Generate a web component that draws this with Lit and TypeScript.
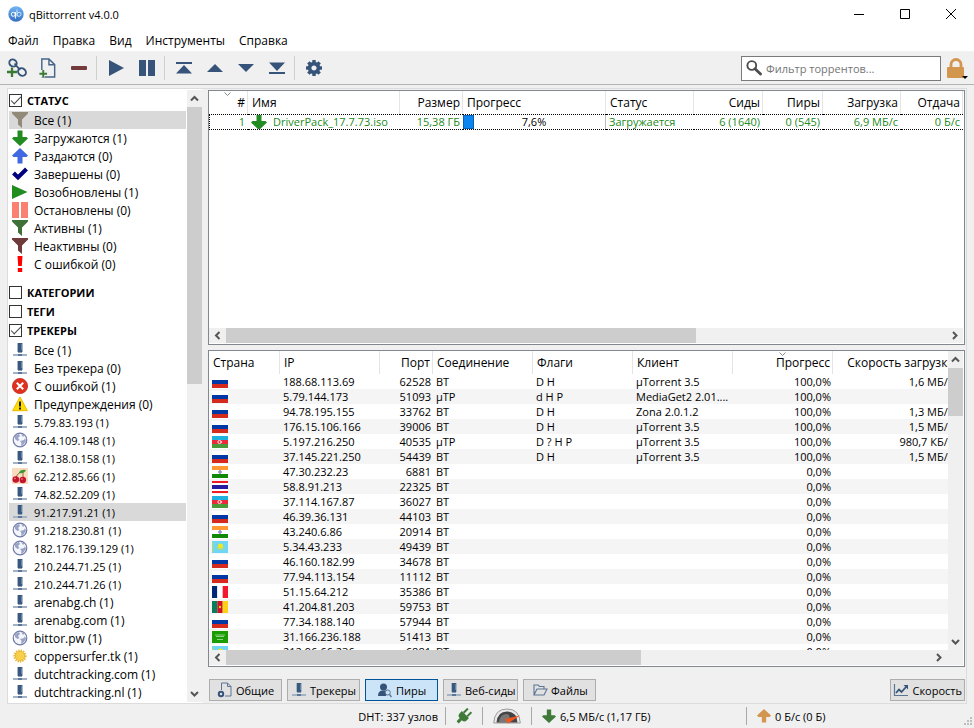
import { LitElement, html, css, svg, nothing, TemplateResult } from "lit";
import { customElement, property } from "lit/decorators.js";
import { classMap } from "lit/directives/class-map.js";

const NAVY = "#36537a";

type Icon = { box: string; body: TemplateResult };

const funnel = (color: string): Icon => ({
  box: "0 0 16 16",
  body: svg`<path fill=${color} d="M0 0H16V1.5L10 7.500V16L6 12.500V7.500L0 1.500Z"/>`,
});
const arrow = (color: string, up = false): Icon => ({
  box: "0 0 16 16",
  body: up
    ? svg`<path fill=${color} d="M8 0L16 7.500L14.500 9H10.500V15.500H5.500V9H1.500L0 7.500Z"/>`
    : svg`<path fill=${color} d="M8 16L16 8.500L14.500 7H10.500V.5H5.500V7H1.500L0 8.500Z"/>`,
});
const pageOutline = "M5.500 1H13L19 7V20H5.500Z M13 1V7H19";
const gearTeeth = [0, 45, 90, 135, 180, 225, 270, 315];

const icons: Record<string, Icon> = {
  logo: {
    box: "0 0 16 16",
    body: svg`<defs><linearGradient id="lg" x1="0" y1="0" x2="0" y2="1"><stop offset="0" stop-color="#72b4f5"/><stop offset="1" stop-color="#356ebf"/></linearGradient></defs>
      <circle cx="8" cy="8" r="7.700" fill="url(#lg)"/>
      <circle cx="5.300" cy="8.300" r="2" fill="none" stroke="#fff"/><path d="M7.400 6V12.500" stroke="#fff"/>
      <circle cx="11" cy="8.300" r="2" fill="none" stroke="#c8e8ff"/><path d="M9 3.500V10.500" stroke="#c8e8ff"/>`,
  },
  addLink: {
    box: "0 0 20 20",
    body: svg`<g fill="none" stroke=${NAVY} stroke-width="1.900"><ellipse cx="6" cy="5" rx="3.800" ry="3.400" transform="rotate(35 6 5)"/><ellipse cx="15" cy="14" rx="4.200" ry="3.500" transform="rotate(40 15 14)"/><path d="M7.500 5.500L13 12"/></g>
      <path d="M0 14H10M5 9.500V19" stroke="#efefef" stroke-width="4"/><path d="M0 14H10M5 9.500V19" stroke="#3a7a35" stroke-width="2.300"/>`,
  },
  addFile: {
    box: "0 0 20 21",
    body: svg`<path d=${pageOutline} transform="translate(-2 0)" fill="none" stroke="#47648a" stroke-width="1.500"/>
      <path d="M0 16.500H9M4.500 12.500V20.500" stroke="#efefef" stroke-width="4"/><path d="M1 16.500H9M5 12.500V20.500" stroke="#3a7a35" stroke-width="2"/>`,
  },
  remove: { box: "0 0 16 16", body: svg`<rect x="0" y="6" width="16" height="4" rx="1" fill="#733b3b"/>` },
  play: { box: "0 0 16 16", body: svg`<path fill=${NAVY} d="M1 0L16 8L1 16Z"/>` },
  pause: { box: "0 0 16 16", body: svg`<path fill=${NAVY} d="M0 0H7V16H0ZM9 0H16V16H9Z"/>` },
  top: { box: "0 0 16 12", body: svg`<path fill=${NAVY} d="M0 0H16V2H0ZM8 3L16 11.500H0Z"/>` },
  up: { box: "0 0 16 12", body: svg`<path fill=${NAVY} d="M8 2L16 10H0Z"/>` },
  down: { box: "0 0 16 12", body: svg`<path fill=${NAVY} d="M8 10L16 2H0Z"/>` },
  bottom: { box: "0 0 16 12", body: svg`<path fill=${NAVY} d="M0 10H16V12H0ZM8 9L16 .5H0Z"/>` },
  gear: {
    box: "-8 -8 16 16",
    body: svg`<circle r="4.400" fill="none" stroke=${NAVY} stroke-width="3.600"/>${gearTeeth.map(
      (a) => svg`<rect x="-1.700" y="-8" width="3.400" height="3" fill=${NAVY} transform="rotate(${a})"/>`,
    )}`,
  },
  search: {
    box: "0 0 16 16",
    body: svg`<circle cx="5.800" cy="5.500" r="4.400" fill="none" stroke="#4d4d4d" stroke-width="1.900"/><path d="M9 8.700L14.500 14" stroke="#4d4d4d" stroke-width="2.800" stroke-linecap="round"/>`,
  },
  lock: {
    box: "0 0 21 21",
    body: svg`<path d="M4 10V6.500A5 5 0 0 1 14 6.500V10" fill="none" stroke="#d3964f" stroke-width="2.800"/><rect x="0" y="9" width="17" height="11" rx="1" fill="#d3964f"/><path d="M15 18H21L18 21Z" fill="#000"/>`,
  },
  funnelAll: funnel("#918a78"),
  funnelOn: funnel("#3f7038"),
  funnelOff: funnel("#6e3a3a"),
  arrowDown: arrow("#228b22"),
  arrowUp: arrow("#4169e1", true),
  statusDown: arrow("#3f7a38"),
  statusUp: arrow("#d3964f", true),
  check: { box: "0 0 16 16", body: svg`<path d="M1.500 7L6 11.500L14.500 3" fill="none" stroke="#000080" stroke-width="4"/>` },
  resumed: { box: "0 0 16 16", body: svg`<path fill="#228b22" d="M0 1L15.500 8L0 15Z"/>` },
  paused: { box: "0 0 16 16", body: svg`<path fill="#fa8072" d="M0 0H7V16H0ZM9 0H16V16H9Z"/>` },
  error: { box: "0 0 16 16", body: svg`<path fill="#f00" d="M5.500 0H10.500L9.800 10H6.200ZM5.800 12H10.200V16H5.800Z"/>` },
  server: {
    box: "0 0 16 16",
    body: svg`<path d="M1 13H15" stroke="#a3b2c5" stroke-width="2"/><rect x="5" y="1" width="6" height="9" fill="#a9b6c6"/><rect x="6" y="1" width="4" height="9" fill="#395880"/><path d="M9.500 2V8" stroke="#6b83a3"/><path d="M6 10.500H10" stroke="#8a9db6"/><rect x="6" y="12" width="4" height="2" fill="#5c7799"/>`,
  },
  failed: { box: "0 0 16 16", body: svg`<circle cx="8" cy="8" r="7.600" fill="#e03020" stroke="#c22a1c" stroke-width=".8"/><path d="M4.800 4.800L11.200 11.200M11.200 4.800L4.800 11.200" stroke="#fff" stroke-width="2"/>` },
  warning: { box: "0 0 16 16", body: svg`<path d="M8 1L15.400 14.700H.6Z" fill="#fd0" stroke="#eeb800"/><path d="M8 5.500V10.500M8 11.500V13.500" stroke="#111" stroke-width="1.900"/>` },
  globe: {
    box: "0 0 16 16",
    body: svg`<circle cx="8" cy="8" r="6.800" fill="#f4f6fb" stroke="#7079a8" stroke-width="1.200"/><path d="M3 4L7 2L8 4L6 6L7.500 8L5.500 9L3 7ZM9 2L12.500 3.500L11 5ZM8 9L12 8L13 6L14 9L11 13L9 14L9.500 11Z" fill="#98a3c6"/>`,
  },
  cherry: {
    box: "0 0 16 16",
    body: svg`<rect width="16" height="16" fill="#fadcc0"/><path d="M4 10Q5 5 11 3Q11 7 11 10" fill="none" stroke="#8a6c3a"/><path d="M7 5Q8 1 14 2Q12 6 7 5Z" fill="#3f9a33"/><circle cx="3.800" cy="11.500" r="3.300" fill="#c4142c"/><circle cx="10.800" cy="12" r="3.300" fill="#c4142c"/><circle cx="3" cy="10.500" r=".8" fill="#f5a0a0"/><circle cx="10" cy="11" r=".8" fill="#f5a0a0"/>`,
  },
  sun: {
    box: "-8 -8 16 16",
    body: svg`<circle r="5.600" fill="none" stroke="#e8b830" stroke-width="2" stroke-dasharray="1.400 1"/><circle r="4.700" fill="#f7cf48" stroke="#e0a828" stroke-width=".7"/>`,
  },
  general: {
    box: "0 0 16 16",
    body: svg`<path d="M4.500 8V1H10.500L14 4.500V14H8M10.500 1V4.500H14" fill="none" stroke="#5c7594"/><circle cx="4" cy="12" r="2.200" fill="none" stroke=${NAVY} stroke-width="2"/>`,
  },
  peers: {
    box: "0 0 16 16",
    body: svg`<circle cx="6.500" cy="5" r="3.500" fill=${NAVY}/><path d="M1 14Q1 9 5 8.500H8Q10 8.700 10.500 9.500L9 14Z" fill=${NAVY}/><circle cx="10.800" cy="10.500" r="2.500" fill="#cce4f7" stroke="#5c7594"/><path d="M12.500 12.500L14.500 15" stroke="#5c7594" stroke-width="1.300"/>`,
  },
  folder: { box: "0 0 16 16", body: svg`<path d="M2 13V3H6L7.500 4.500H12V6.500M2 13L5 7H15L12 13Z" fill="none" stroke="#5c7594" stroke-width="1.100"/>` },
  speed: { box: "0 0 16 16", body: svg`<path d="M1.500 2V13.500H15" fill="none" stroke="#5c7594" stroke-width="1.200"/><path d="M3 11L6 7.500L8.500 10L13 5" fill="none" stroke=${NAVY} stroke-width="1.800"/><path d="M10.500 3H15V7.500Z" fill=${NAVY}/>` },
  plug: {
    box: "0 0 16 16",
    body: svg`<g transform="rotate(45 8 8)" fill="#3f7a38"><path d="M3 6H13V9Q13 12.500 9.500 12.500V17H6.500V12.500Q3 12.500 3 9Z"/><path d="M4.500 0H6.500V6H4.500ZM9.500 0H11.500V6H9.500Z"/></g>`,
  },
  gauge: {
    box: "0 0 28 16",
    body: svg`<path d="M.7 15Q1.500 1 14 1Q26.500 1 27.300 15Z" fill="#e9e9e9" stroke="#9a9a9a"/><path d="M3.500 14.500Q4.500 3.500 14 3.500Q23.500 3.500 24.500 14.500Z" fill="#444"/><path d="M6 14Q7 6 14 6Q17 6 17 14Z" fill="#777"/><path d="M12 11L27 7.500L15 15.500Z" fill="#f0551e"/>`,
  },
  grip: { box: "0 0 8 8", body: svg`<path d="M6 0H8V2H6ZM3 3H5V5H3ZM6 3H8V5H6ZM0 6H2V8H0ZM3 6H5V8H3ZM6 6H8V8H6Z" fill="#bfbfbf"/>` },
};

const iconTpl = (name: string, cls: string) => {
  const i = icons[name];
  return html`<svg class=${cls} viewBox=${i.box} aria-hidden="true">${i.body}</svg>`;
};

const hStripes = (colors: string[]) =>
  svg`${colors.map((c, i) => svg`<rect y=${(i * 12) / colors.length} width="16" height=${12 / colors.length} fill=${c}/>`)}`;
const vStripes = (colors: string[]) =>
  svg`${colors.map((c, i) => svg`<rect x=${(i * 16) / colors.length} width=${16 / colors.length} height="12" fill=${c}/>`)}`;

const flags: Record<string, TemplateResult> = {
  ru: hStripes(["#fff", "#0039a6", "#d52b1e"]),
  az: svg`${hStripes(["#1eb0de", "#ed2939", "#4a9a3a"])}<circle cx="7.500" cy="6" r="1.600" fill="none" stroke="#fff" stroke-width=".9"/><circle cx="9.500" cy="6" r=".7" fill="#fff"/>`,
  in: svg`${hStripes(["#f93", "#fff", "#128807"])}<path d="M6 6H10M8 4V8" stroke="#8f8fc8" stroke-width="1.600"/>`,
  th: hStripes(["#ed1c24", "#fff", "#241d9f", "#241d9f", "#fff", "#ed1c24"]),
  kz: svg`<rect width="16" height="12" fill="#6fd6f5"/><path d="M1 1V11" stroke="#b5dc6c"/><circle cx="8.500" cy="5" r="2.600" fill="#f2e61c"/><path d="M4 6Q8.500 11 13 6" fill="none" stroke="#c9de54"/>`,
  fr: vStripes(["#002678", "#fff", "#f31830"]),
  cm: svg`${vStripes(["#0a7c5a", "#ce1126", "#fcd116"])}<circle cx="8" cy="6" r="1.200" fill="#fcd116"/>`,
  sa: svg`<rect width="16" height="12" fill="#199d00"/><path d="M3 4H13M4 5.500H12" stroke="#8fd084" stroke-width="1.200"/><path d="M5 8.500H11" stroke="#b0dfa8" stroke-width=".8"/>`,
};

const statuses: [string, string][] = [
  ["funnelAll", "Все (1)"],
  ["arrowDown", "Загружаются (1)"],
  ["arrowUp", "Раздаются (0)"],
  ["check", "Завершены (0)"],
  ["resumed", "Возобновлены (1)"],
  ["paused", "Остановлены (0)"],
  ["funnelOn", "Активны (1)"],
  ["funnelOff", "Неактивны (0)"],
  ["error", "С ошибкой (0)"],
];

const trackers: [string, string][] = [
  ["server", "Все (1)"],
  ["server", "Без трекера (0)"],
  ["failed", "С ошибкой (1)"],
  ["warning", "Предупреждения (0)"],
  ["server", "5.79.83.193 (1)"],
  ["globe", "46.4.109.148 (1)"],
  ["server", "62.138.0.158 (1)"],
  ["cherry", "62.212.85.66 (1)"],
  ["server", "74.82.52.209 (1)"],
  ["server", "91.217.91.21 (1)"],
  ["globe", "91.218.230.81 (1)"],
  ["globe", "182.176.139.129 (1)"],
  ["server", "210.244.71.25 (1)"],
  ["server", "210.244.71.26 (1)"],
  ["server", "arenabg.ch (1)"],
  ["server", "arenabg.com (1)"],
  ["globe", "bittor.pw (1)"],
  ["sun", "coppersurfer.tk (1)"],
  ["server", "dutchtracking.com (1)"],
  ["server", "dutchtracking.nl (1)"],
];

// flag, IP, port, connection, flags, client, progress, download speed
const peers: string[][] = [
  ["ru", "188.68.113.69", "62528", "BT", "D H", "μTorrent 3.5", "100,0%", "1,6 МБ/с"],
  ["ru", "5.79.144.173", "51093", "μTP", "d H P", "MediaGet2 2.01....", "100,0%", ""],
  ["ru", "94.78.195.155", "33762", "BT", "D H", "Zona 2.0.1.2", "100,0%", "1,3 МБ/с"],
  ["ru", "176.15.106.166", "39006", "BT", "D H", "μTorrent 3.5", "100,0%", "1,5 МБ/с"],
  ["az", "5.197.216.250", "40535", "μTP", "D ? H P", "μTorrent 3.5", "100,0%", "980,7 КБ/с"],
  ["ru", "37.145.221.250", "54439", "BT", "D H", "μTorrent 3.5", "100,0%", "1,5 МБ/с"],
  ["in", "47.30.232.23", "6881", "BT", "", "", "0,0%", ""],
  ["th", "58.8.91.213", "22325", "BT", "", "", "0,0%", ""],
  ["az", "37.114.167.87", "36027", "BT", "", "", "0,0%", ""],
  ["ru", "46.39.36.131", "44103", "BT", "", "", "0,0%", ""],
  ["in", "43.240.6.86", "20914", "BT", "", "", "0,0%", ""],
  ["kz", "5.34.43.233", "49439", "BT", "", "", "0,0%", ""],
  ["ru", "46.160.182.99", "34678", "BT", "", "", "0,0%", ""],
  ["ru", "77.94.113.154", "11112", "BT", "", "", "0,0%", ""],
  ["fr", "51.15.64.212", "35386", "BT", "", "", "0,0%", ""],
  ["cm", "41.204.81.203", "59753", "BT", "", "", "0,0%", ""],
  ["ru", "77.34.188.140", "57944", "BT", "", "", "0,0%", ""],
  ["sa", "31.166.236.188", "51413", "BT", "", "", "0,0%", ""],
  ["kz", "212.96.66.236", "6881", "BT", "", "", "0,0%", ""],
];

@customElement("scroll-bar")
export class ScrollBar extends LitElement {
  @property({ type: Boolean, reflect: true }) vertical = false;
  @property({ type: Number }) size = 50;

  static styles = css`
    :host { display: flex; height: 15px; background: #f0f0f0; flex: none; }
    :host([vertical]) { flex-direction: column; width: 15px; height: auto; }
    .end { flex: none; width: 17px; height: 15px; display: grid; place-items: center; }
    :host([vertical]) .end { width: 15px; height: 17px; }
    svg { width: 9px; height: 9px; fill: none; stroke: #555; stroke-width: 2; }
    .track { flex: 1; min-width: 0; min-height: 0; }
    .thumb { background: #cdcdcd; height: 100%; width: 100%; }
  `;

  render() {
    const [a, b] = this.vertical
      ? ["M1 6.500L4.500 3L8 6.500", "M1 3L4.500 6.500L8 3"]
      : ["M6.500 1L3 4.500L6.500 8", "M3 1L6.500 4.500L3 8"];
    return html`<div class="end"><svg viewBox="0 0 9 9"><path d=${a} /></svg></div>
      <div class="track">
        <div class="thumb" style=${this.vertical ? `height:${this.size}%` : `width:${this.size}%`}></div>
      </div>
      <div class="end"><svg viewBox="0 0 9 9"><path d=${b} /></svg></div>`;
  }
}

@customElement("app-root")
export class AppRoot extends LitElement {
  static styles = css`
    :host {
      display: flex; flex-direction: column; height: 100vh; overflow: hidden;
      background: #f0f0f0; color: #000;
      font: 11px/15px "Open Sans", "Noto Sans", sans-serif;
    }
    * { box-sizing: border-box; }
    button { font: inherit; color: inherit; background: none; border: 0; padding: 0; margin: 0; }
    svg { display: block; flex: none; }
    .i16 { width: 16px; height: 16px; }
    .i20 { width: 20px; height: 20px; }

    .title { flex: none; height: 30px; background: #fff; display: flex; align-items: center; padding: 0 0 2px 8px; gap: 5px; }
    .title h1 { font: inherit; margin: 0; flex: 1; }
    .controls { display: flex; }
    .win { width: 46px; height: 28px; display: grid; place-items: center; }
    .win svg { width: 12px; height: 12px; fill: none; stroke: #000; }

    .menu { flex: none; height: 22px; background: #fff; display: flex; align-items: center; gap: 14px; padding-left: 8px; border-bottom: 1px solid #f2f2f2; font-size: 12px; }

    .tools { flex: none; height: 33px; display: flex; align-items: center; border-bottom: 1px solid #b4b4b4; padding: 0 6px 0 1px; }
    .tools .tool { width: 31px; height: 30px; display: grid; place-items: center; }
    .tools .flat { width: 16px; height: 12px; }
    .sep { width: 1px; height: 24px; background: #cfcfcf; margin: 0 3px 0 2px; }
    .space { flex: 1; }
    .filter { width: 200px; height: 25px; border: 1px solid #7a7a7a; background: #fff; display: flex; align-items: center; padding-left: 4px; gap: 4px; margin-right: 6px; }
    .filter input { flex: 1; min-width: 0; border: 0; outline: 0; padding: 0; background: none; font: inherit; color: #000; }
    .filter input::placeholder { color: #757575; opacity: 1; }
    .lock { width: 21px; height: 21px; }

    .main { flex: 1; min-height: 0; margin: 3px 7px 0; border: 1px solid #dcdcdc; display: flex; }
    .side { width: 194px; flex: none; background: #fff; display: flex; overflow: hidden; }
    .lists { flex: 1; min-width: 0; padding: 2px 1px 0; overflow: hidden; }
    .side scroll-bar { margin: 1px 0; }
    .head { display: flex; align-items: center; gap: 5px; height: 19px; font-weight: 700; }
    .head.first { height: 20px; padding-bottom: 2px; }
    .head.gap { margin-top: 10px; }
    .head input { appearance: none; width: 13px; height: 13px; margin: 0; border: 1px solid #333; background: #fff; display: grid; place-items: center; }
    .head input:checked::after { content: ""; width: 9px; height: 4px; border: solid #444; border-width: 0 0 1px 1px; transform: rotate(-45deg) translate(1px, -1px); }
    ul { list-style: none; margin: 0; padding: 0; }
    .row { width: 100%; height: 18px; display: flex; align-items: center; gap: 6px; padding-left: 3px; text-align: left; white-space: nowrap; }
    .row.word { font-size: 12px; }
    .row.on { background: #d9d9d9; }
    .trackers { margin-top: 1px; }

    .content { flex: 1; min-width: 0; display: flex; flex-direction: column; padding: 1px 1px 2px 6px; }
    .frame { border: 1px solid #828790; background: #fff; display: flex; flex-direction: column; overflow: hidden; padding: 0 1px 1px 0; }
    .torrents { flex: none; height: 255px; }
    .peers { flex: 1; min-height: 0; margin-top: 5px; }
    .view { flex: 1; min-height: 0; min-width: 0; overflow: hidden; }
    .split { flex: 1; min-height: 0; display: flex; }
    .corner { display: flex; background: #f0f0f0; }
    .corner scroll-bar { flex: 1; margin-right: 16px; }

    table { table-layout: fixed; border-collapse: separate; border-spacing: 0; width: 0; }
    th, td { padding: 0 3px; white-space: nowrap; overflow: hidden; text-align: left; font-weight: 400; }
    th { height: 23px; border-right: 1px solid #e5e5e5; font-size: 12px; padding: 0 3px 0 4px; }
    th.r { padding-right: 2px; }
    td { height: 15px; line-height: 14px; }
    .r { text-align: right; }
    th.sorted { position: relative; }
    th .caret { position: absolute; top: 1px; left: 50%; width: 7px; height: 5px; margin-left: -4px; fill: none; stroke: #888; }

    .torrents td { color: #228b22; height: 16px; border: dotted #000; border-width: 1px 0; }
    .torrents td:first-child { border-left-width: 1px; }
    .named { display: flex; align-items: center; gap: 6px; }
    .torrents .named svg { margin: -1px 0; }
    .bar { display: block; position: relative; height: 14px; color: #000; text-align: center; border-right: 1px solid #bcbcbc; }
    .fill { display: block; position: absolute; left: 0; top: 0; bottom: 0; background: #0a84ef; border: 1px solid #0a5fb4; }
    .pct { position: relative; }
    td.flush { padding: 0; line-height: 13px; }

    tbody tr:nth-child(even) td { background: #f5f5f5; }
    .peers td { padding-left: 3px; padding-right: 2px; }
    .peers td.clip { padding-right: 5px; }
    .flag { width: 16px; height: 12px; }

    .tabs { flex: none; display: flex; gap: 5px; margin: 12px 0 0 1px; }
    .tab { height: 22px; min-width: 73px; border: 1px solid #adadad; background: #e1e1e1; display: flex; align-items: center; justify-content: center; gap: 3px; padding: 0 2px; white-space: nowrap; }
    .tab.on { background: #cce4f7; border-color: #005499; }

    .status { flex: none; height: 24px; display: flex; align-items: center; justify-content: flex-end; }
    .status .cell { display: flex; align-items: center; gap: 4px; height: 18px; padding: 0 7px 0 10px; border-left: 1px solid #a8a8a8; white-space: nowrap; }
    .status .cell:first-child { border: 0; }
    .status .net { width: 37px; }
    .status .rate { width: 49px; }
    .status .dl { width: 215px; }
    .status .ul { width: 228px; padding-right: 2px; }
    .i14 { width: 14px; height: 14px; }
    .gauge { width: 28px; height: 16px; }
    .grip { width: 8px; height: 8px; margin-left: auto; align-self: flex-end; }
  `;

  private tool(name: string, label: string, cls: string) {
    return html`<button class="tool" aria-label=${label}>${iconTpl(name, cls)}</button>`;
  }

  private list(items: [string, string][], active: number) {
    return items.map(
      ([icon, text], i) => html`<li>
        <button class=${classMap({ row: true, word: /[а-яa-z]/i.test(text), on: i === active })}>
          ${iconTpl(icon, "i16")}<span>${text}</span>
        </button>
      </li>`,
    );
  }

  private head(text: string, on: boolean, extra = "") {
    return html`<label class="head ${extra}"><input type="checkbox" ?checked=${on} />${text}</label>`;
  }

  private th([text, right, sorted]: [string, boolean?, boolean?]) {
    return html`<th scope="col" class=${classMap({ r: !!right, sorted: !!sorted })}>
      ${text}${sorted ? html`<svg class="caret" viewBox="0 0 7 5"><path d="M.5 .5L3.500 3.500L6.500 .5" /></svg>` : nothing}
    </th>`;
  }

  private cols(widths: number[]) {
    return html`<colgroup>${widths.map((w) => html`<col style="width:${w}px" />`)}</colgroup>`;
  }

  private tab(icon: string, text: string, on = false) {
    return html`<button class=${classMap({ tab: true, on })}>${iconTpl(icon, "i16")}<span>${text}</span></button>`;
  }

  render() {
    return html`
      <header class="title">
        ${iconTpl("logo", "i16")}
        <h1>qBittorrent v4.0.0</h1>
        <div class="controls">
          <button class="win" aria-label="Свернуть"><svg viewBox="0 0 12 12"><path d="M1 6.500H11" /></svg></button>
          <button class="win" aria-label="Развернуть"><svg viewBox="0 0 12 12"><path d="M1.500 1.500H10.500V10.500H1.500Z" /></svg></button>
          <button class="win" aria-label="Закрыть"><svg viewBox="0 0 12 12"><path d="M1 1L11 11M11 1L1 11" /></svg></button>
        </div>
      </header>
      <nav class="menu">
        ${["Файл", "Правка", "Вид", "Инструменты", "Справка"].map((m) => html`<button>${m}</button>`)}
      </nav>
      <div class="tools">
        ${this.tool("addLink", "Добавить ссылку", "i20")}${this.tool("addFile", "Добавить файл", "i20")}${this.tool("remove", "Удалить", "i16")}
        <span class="sep"></span>
        ${this.tool("play", "Возобновить", "i16")}${this.tool("pause", "Остановить", "i16")}
        <span class="sep"></span>
        ${this.tool("top", "В начало", "flat")}${this.tool("up", "Выше", "flat")}${this.tool("down", "Ниже", "flat")}${this.tool("bottom", "В конец", "flat")}
        <span class="sep"></span>
        ${this.tool("gear", "Настройки", "i16")}
        <span class="space"></span>
        <label class="filter">${iconTpl("search", "i16")}<input type="text" aria-label="Фильтр" placeholder="Фильтр торрентов..." /></label>
        <button aria-label="Блокировка">${iconTpl("lock", "lock")}</button>
      </div>
      <main class="main">
        <aside class="side">
          <div class="lists">
            ${this.head("СТАТУС", true, "first")}
            <ul>${this.list(statuses, 0)}</ul>
            ${this.head("КАТЕГОРИИ", false, "gap")}${this.head("ТЕГИ", false)}${this.head("ТРЕКЕРЫ", true)}
            <ul class="trackers">${this.list(trackers, 9)}</ul>
          </div>
          <scroll-bar vertical .size=${48}></scroll-bar>
        </aside>
        <section class="content">
          <div class="frame torrents">
            <div class="view">
              <table>
                ${this.cols([39, 152, 63, 143, 88, 69, 60, 78, 62])}
                <thead><tr>
                  ${(
                    [["#", true, true], ["Имя"], ["Размер", true], ["Прогресс"], ["Статус"], ["Сиды", true], ["Пиры", true], ["Загрузка", true], ["Отдача", true]] as [string, boolean?, boolean?][]
                  ).map((c) => this.th(c))}
                </tr></thead>
                <tbody><tr>
                  <td class="r">1</td>
                  <td><span class="named">${iconTpl("arrowDown", "i16")}DriverPack_17.7.73.iso</span></td>
                  <td class="r">15,38 ГБ</td>
                  <td class="flush"><span class="bar"><span class="fill" style="width:7.6%"></span><span class="pct">7,6%</span></span></td>
                  <td>Загружается</td>
                  <td class="r">6 (1640)</td>
                  <td class="r">0 (545)</td>
                  <td class="r">6,9 МБ/с</td>
                  <td class="r">0 Б/с</td>
                </tr></tbody>
              </table>
            </div>
            <scroll-bar .size=${65.3}></scroll-bar>
          </div>
          <div class="frame peers">
            <div class="split">
              <div class="view">
                <table>
                  ${this.cols([71, 100, 53, 100, 100, 100, 100, 125])}
                  <thead><tr>
                    ${(
                      [["Страна"], ["IP"], ["Порт", true], ["Соединение"], ["Флаги"], ["Клиент"], ["Прогресс", true, true], ["Скорость загрузки", true]] as [string, boolean?, boolean?][]
                    ).map((c) => this.th(c))}
                  </tr></thead>
                  <tbody>
                    ${peers.map(
                      ([flag, ip, port, conn, fl, client, prog, speed]) => html`<tr>
                        <td><svg class="flag" viewBox="0 0 16 12" preserveAspectRatio="none">${flags[flag]}</svg></td>
                        <td>${ip}</td>
                        <td class="r">${port}</td>
                        <td>${conn}</td>
                        <td>${fl}</td>
                        <td>${client}</td>
                        <td class="r">${prog}</td>
                        <td class="r clip">${speed}</td>
                      </tr>`,
                    )}
                  </tbody>
                </table>
              </div>
              <scroll-bar vertical .size=${18}></scroll-bar>
            </div>
            <div class="corner"><scroll-bar .size=${59}></scroll-bar></div>
          </div>
          <div class="tabs">
            ${this.tab("general", "Общие")}${this.tab("server", "Трекеры")}${this.tab("peers", "Пиры", true)}${this.tab("server", "Веб-сиды")}${this.tab("folder", "Файлы")}
            <span class="space"></span>
            ${this.tab("speed", "Скорость")}
          </div>
        </section>
      </main>
      <footer class="status">
        <span class="cell">DHT: 337 узлов</span>
        <span class="cell net">${iconTpl("plug", "i16")}</span>
        <span class="cell rate">${iconTpl("gauge", "gauge")}</span>
        <span class="cell dl">${iconTpl("statusDown", "i14")}6,5 МБ/с (1,17 ГБ)</span>
        <span class="cell ul">${iconTpl("statusUp", "i14")}0 Б/с (0 Б)${iconTpl("grip", "grip")}</span>
      </footer>
    `;
  }
}
